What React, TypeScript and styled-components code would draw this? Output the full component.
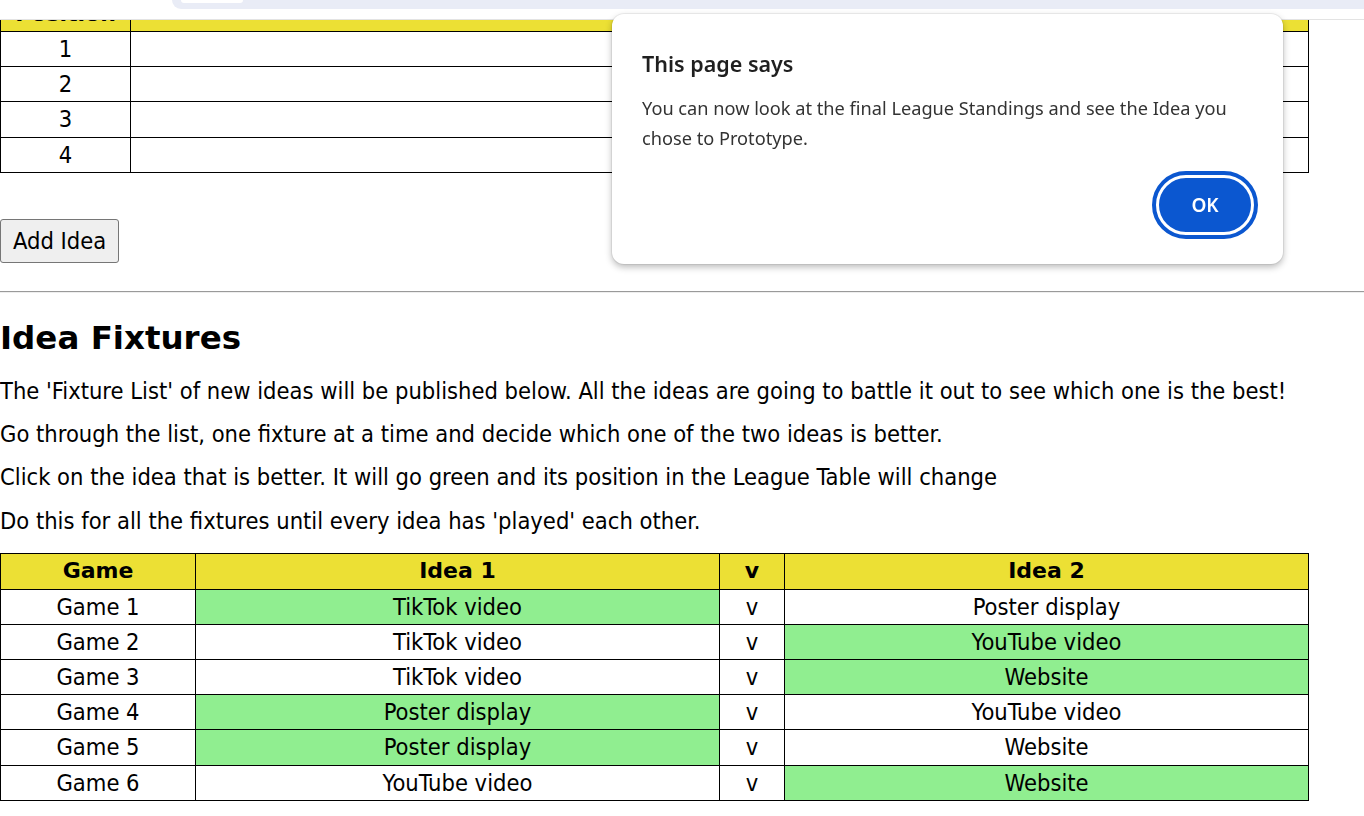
import React from 'react';
import styled, { createGlobalStyle } from 'styled-components';

const GlobalStyle = createGlobalStyle`
    html, body {
        margin: 0;
        padding: 0;
        background: #fff;
        overflow: hidden;
    }

    body {
        font-family: 'DejaVu Sans Condensed', 'DejaVu Sans', sans-serif;
        color: #000;
    }
`;

const TopStrip = styled.div`
    display: flex;
    height: 19px;
    border-bottom: 1px solid #e3e3e3;
    background: #fff;
`;

const StripGap = styled.div`
    width: 172px;
`;

const Omnibox = styled.div`
    flex: 1;
    height: 9px;
    padding-left: 9px;
    background: #e9ecf6;
    border-bottom-left-radius: 10px;
`;

const OmniTab = styled.div`
    width: 62px;
    height: 3px;
    background: #fff;
    border-bottom-left-radius: 4px;
    border-bottom-right-radius: 4px;
`;

const Viewport = styled.div`
    height: 796px;
    overflow: hidden;
`;

const Page = styled.div`
    margin-top: -25px;
`;

const Table = styled.table`
    width: 1309px;
    border-collapse: collapse;
    table-layout: fixed;
    font-size: 23.5px;
`;

const HeadCell = styled.th<{ w?: number }>`
    width: ${({ w }) => (w ? `${w}px` : 'auto')};
    height: 35px;
    padding: 0;
    border: 1px solid #000;
    background: #ece034;
    font-family: 'DejaVu Sans', sans-serif;
    font-weight: bold;
    font-size: 22px;
    line-height: 26px;
    text-align: center;
`;

const Cell = styled.td<{ win?: boolean }>`
    height: 34.2px;
    padding: 0;
    border: 1px solid #000;
    background: ${({ win }) => (win ? '#90ee90' : '#fff')};
    line-height: 26px;
    text-align: center;
`;

const AddButton = styled.button`
    display: block;
    margin-top: 46px;
    height: 44px;
    padding: 0 12px;
    border: 1px solid #767676;
    border-radius: 3px;
    background: #efefef;
    font-family: 'DejaVu Sans Condensed', 'DejaVu Sans', sans-serif;
    font-size: 23.5px;
    color: #000;
`;

const Rule = styled.hr`
    margin: 28px 0 0;
    border: none;
    border-top: 1px solid #9a9a9a;
    border-bottom: 1px solid #eee;
`;

const Title = styled.h2`
    margin: 25px 0 20px;
    font-family: 'DejaVu Sans', sans-serif;
    font-size: 32.5px;
    line-height: 40px;
    font-weight: bold;
`;

const Text = styled.p`
    margin: 0 0 17.3px;
    font-size: 23.5px;
    line-height: 26px;
    white-space: nowrap;
`;

const FixtureTable = styled(Table)`
    margin-top: 19px;
`;

const Dialog = styled.div`
    position: fixed;
    left: 612px;
    top: 14px;
    width: 671px;
    height: 250px;
    box-sizing: border-box;
    padding: 37px 25px 25px 30px;
    background: #fff;
    border-radius: 12px;
    box-shadow: 0 0 0 1px rgba(0, 0, 0, 0.06), 0 3px 7px rgba(0, 0, 0, 0.28);
    font-family: 'Noto Sans', 'Open Sans', sans-serif;
    color: #1f1f1f;
    display: flex;
    flex-direction: column;
`;

const DialogTitle = styled.div`
    font-size: 21.5px;
    font-weight: 600;
    line-height: 26px;
`;

const DialogBody = styled.div`
    margin-top: 16px;
    font-size: 18.2px;
    line-height: 30px;
    color: #333;
    white-space: nowrap;
`;

const DialogActions = styled.div`
    margin-top: auto;
    display: flex;
    justify-content: flex-end;
`;

const OkButton = styled.button`
    width: 98px;
    height: 60px;
    border: 3px solid #fff;
    border-radius: 30px;
    outline: 4px solid #0b57d0;
    outline-offset: 0;
    margin: 4px;
    background: #0b57d0;
    color: #fff;
    font-family: 'Noto Sans', 'Open Sans', sans-serif;
    font-size: 19px;
    font-weight: 600;
`;

const fixtures = [
    { game: 'Game 1', a: 'TikTok video', b: 'Poster display', winner: 'a' },
    { game: 'Game 2', a: 'TikTok video', b: 'YouTube video', winner: 'b' },
    { game: 'Game 3', a: 'TikTok video', b: 'Website', winner: 'b' },
    { game: 'Game 4', a: 'Poster display', b: 'YouTube video', winner: 'a' },
    { game: 'Game 5', a: 'Poster display', b: 'Website', winner: 'a' },
    { game: 'Game 6', a: 'YouTube video', b: 'Website', winner: 'b' },
];

const App: React.FC = () => {
    return (
        <>
            <GlobalStyle />
            <TopStrip>
                <StripGap />
                <Omnibox>
                    <OmniTab />
                </Omnibox>
            </TopStrip>
            <Viewport>
                <Page>
                    <Table>
                        <thead>
                            <tr>
                                <HeadCell w={129}>Position</HeadCell>
                                <HeadCell />
                            </tr>
                        </thead>
                        <tbody>
                            {[1, 2, 3, 4].map((n) => (
                                <tr key={n}>
                                    <Cell>{n}</Cell>
                                    <Cell />
                                </tr>
                            ))}
                        </tbody>
                    </Table>

                    <AddButton>Add Idea</AddButton>
                    <Rule />

                    <Title>Idea Fixtures</Title>
                    <Text>
                        The 'Fixture List' of new ideas will be published below. All the ideas are going to
                        battle it out to see which one is the best!
                    </Text>
                    <Text>Go through the list, one fixture at a time and decide which one of the two ideas is better.</Text>
                    <Text>Click on the idea that is better. It will go green and its position in the League Table will change</Text>
                    <Text>Do this for all the fixtures until every idea has 'played' each other.</Text>

                    <FixtureTable>
                        <thead>
                            <tr>
                                <HeadCell w={194}>Game</HeadCell>
                                <HeadCell w={523}>Idea 1</HeadCell>
                                <HeadCell w={64}>v</HeadCell>
                                <HeadCell>Idea 2</HeadCell>
                            </tr>
                        </thead>
                        <tbody>
                            {fixtures.map((f) => (
                                <tr key={f.game}>
                                    <Cell>{f.game}</Cell>
                                    <Cell win={f.winner === 'a'}>{f.a}</Cell>
                                    <Cell>v</Cell>
                                    <Cell win={f.winner === 'b'}>{f.b}</Cell>
                                </tr>
                            ))}
                        </tbody>
                    </FixtureTable>
                </Page>
            </Viewport>

            <Dialog>
                <DialogTitle>This page says</DialogTitle>
                <DialogBody>
                    You can now look at the final League Standings and see the Idea you
                    <br />
                    chose to Prototype.
                </DialogBody>
                <DialogActions>
                    <OkButton>OK</OkButton>
                </DialogActions>
            </Dialog>
        </>
    );
};

export default App;
